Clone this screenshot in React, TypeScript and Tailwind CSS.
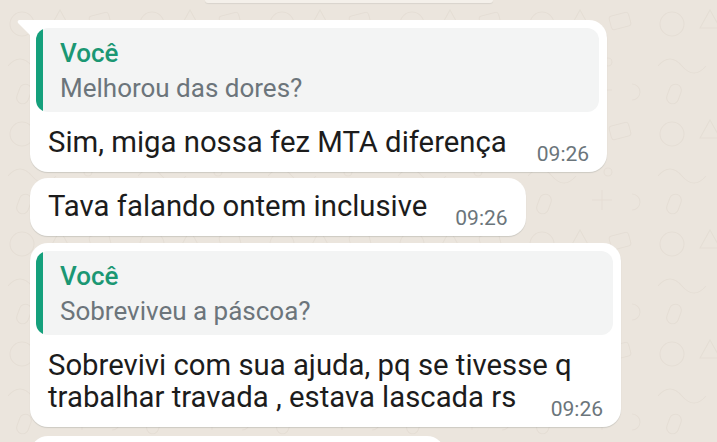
import React from "react";

type Msg = {
  quote?: string;
  text: React.ReactNode;
  time: string;
  gap: number;
  tail?: boolean;
};

const messages: Msg[] = [
  {
    quote: "Melhorou das dores?",
    text: "Sim, miga nossa fez MTA diferença",
    time: "09:26",
    gap: 30,
    tail: true,
  },
  { text: "Tava falando ontem inclusive", time: "09:26", gap: 28 },
  {
    quote: "Sobreviveu a páscoa?",
    text: (
      <>
        Sobrevivi com sua ajuda, pq se tivesse q
        <br />
        trabalhar travada , estava lascada rs
      </>
    ),
    time: "09:26",
    gap: -21,
  },
];

// faint wallpaper doodles
const Wallpaper = () => (
  <svg className="absolute inset-0" width="717" height="442">
    <defs>
      <pattern id="wp" width="130" height="110" patternUnits="userSpaceOnUse">
        <g fill="none" stroke="#e5ded5" strokeWidth="1.1">
          <circle cx="22" cy="24" r="12" />
          <path d="M60 10 l10 18 h-20 z" />
          <rect x="90" y="14" width="20" height="14" rx="3" transform="rotate(-15 100 21)" />
          <path d="M8 66 q12 -14 24 0 t24 0" />
          <circle cx="88" cy="62" r="4" />
          <path d="M72 90 h20 M82 80 v20" />
          <rect x="18" y="84" width="12" height="20" rx="6" transform="rotate(20 24 94)" />
          <path d="M112 84 a8 8 0 1 1 0 16" />
        </g>
      </pattern>
    </defs>
    <rect width="717" height="442" fill="url(#wp)" />
  </svg>
);

const Tail = () => (
  <svg
    className="absolute -left-[13px] top-0"
    width="14"
    height="16"
    viewBox="0 0 14 16"
  >
    <path d="M14 0 H3 C0.5 0 0 2 1.5 3.5 L14 16 Z" fill="#ffffff" />
  </svg>
);

const Bubble: React.FC<{ msg: Msg }> = ({ msg }) => (
  <div
    className={`relative self-start flex flex-col bg-white rounded-[18px] shadow-[0_1px_1px_rgba(11,20,26,0.13)] pt-[8px] pl-[6px] pr-[8px] pb-[14px] ${
      msg.tail ? "rounded-tl-none" : ""
    } ${msg.quote ? "" : "pt-[12px]"}`}
  >
    {msg.tail && <Tail />}
    {msg.quote && (
      <div className="flex bg-[#f3f4f4] rounded-[12px] overflow-hidden mb-[14px]">
        <div className="w-[7px] bg-[#15a07c] shrink-0" />
        <div className="pl-[17px] pr-4 pt-[7px] pb-[7px]">
          <div className="text-[#1b9773] font-medium text-[26px] leading-[36px]">
            Você
          </div>
          <div className="text-[#6c757b] text-[26px] leading-[34px]">
            {msg.quote}
          </div>
        </div>
      </div>
    )}
    <div className="flex items-end pl-[12px] pr-[10px]">
      <div className="text-[#1c1c1c] text-[29.3px] leading-[32px] whitespace-nowrap">
        {msg.text}
      </div>
      <div
        className="text-[#6b757b] text-[21px] leading-[21px] translate-y-[7px] shrink-0"
        style={{ marginLeft: msg.gap }}
      >
        {msg.time}
      </div>
    </div>
  </div>
);

export default function App() {
  return (
    <div
      className="w-[717px] h-[442px] overflow-hidden bg-[#ebe5dd] relative"
      style={{ fontFamily: "Roboto, 'Noto Sans', sans-serif" }}
    >
      <Wallpaper />
      <div className="relative">
        <div className="ml-[205px] w-[288px] h-[3px] bg-[#f4f0ea] rounded-b-md shadow-[0_1px_1px_rgba(11,20,26,0.08)]" />
        <div className="flex flex-col pl-[30px] pt-[17px]">
          <Bubble msg={messages[0]} />
          <div className="h-[6px]" />
          <Bubble msg={messages[1]} />
          <div className="h-[7px]" />
          <Bubble msg={messages[2]} />
          <div className="h-[9px]" />
          <div className="self-start w-[415px] h-[40px] bg-white rounded-[18px] shadow-[0_1px_1px_rgba(11,20,26,0.13)]" />
        </div>
      </div>
    </div>
  );
}
